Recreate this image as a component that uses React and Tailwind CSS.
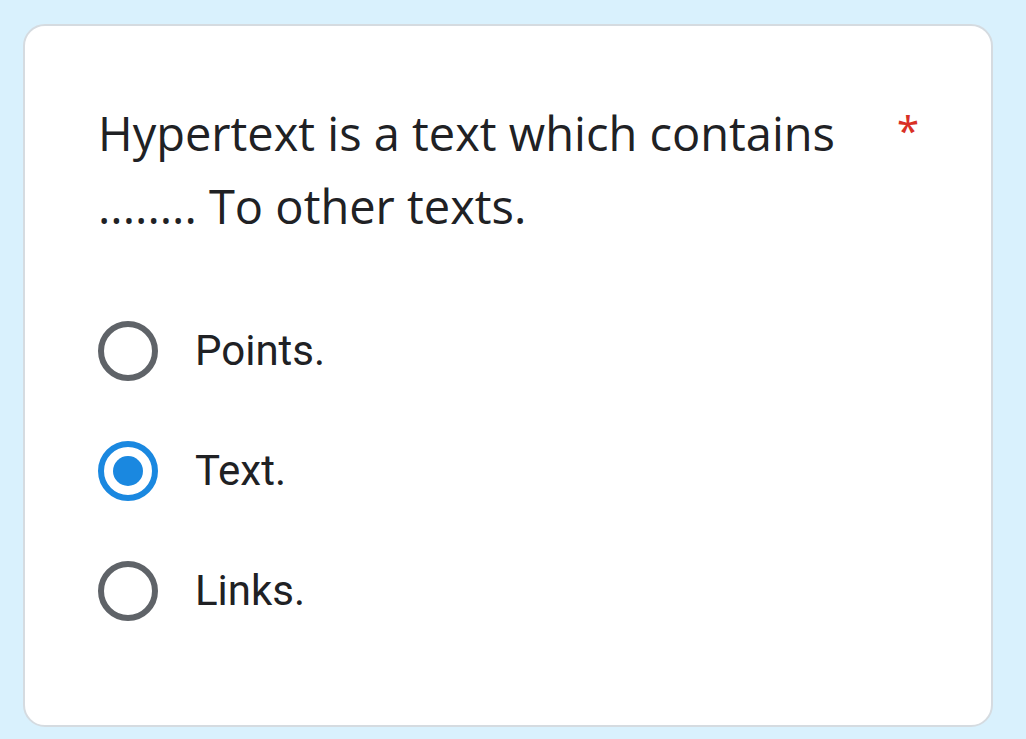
import React, { useState } from "react";

const options = ["Points.", "Text.", "Links."];

const Radio = ({ checked }) => (
  <span
    className={
      "flex h-[60px] w-[60px] shrink-0 items-center justify-center rounded-full border-[6px] " +
      (checked ? "border-[#1a88e0]" : "border-[#5f6368]")
    }
  >
    {checked && <span className="h-[30px] w-[30px] rounded-full bg-[#1a88e0]" />}
  </span>
);

const App = () => {
  const [selected, setSelected] = useState("Text.");

  return (
    <div className="min-h-[739px] bg-[#d9f1fd] pl-[23px] pr-[33px] pt-[24px] pb-[14px]">
      <div className="rounded-[22px] border-2 border-[#d5dbe0] bg-white pl-[73px] pr-[60px] pt-[71px] pb-[104px]">
        <div className="flex items-start">
          <h2
            className="w-[780px] text-[47px] leading-[73px] text-[#202124]"
            style={{ fontFamily: "'Open Sans', sans-serif" }}
          >
            Hypertext is a text which contains ........ To other texts.
          </h2>
          <span className="ml-[19px] mt-[3px] text-[40px] leading-[60px] text-[#d93025]">*</span>
        </div>

        <div className="mt-[78px] flex flex-col gap-[60px]">
          {options.map((opt) => (
            <label
              key={opt}
              className="flex cursor-pointer items-center gap-[37px]"
              onClick={() => setSelected(opt)}
            >
              <Radio checked={selected === opt} />
              <span
                className="text-[42px] leading-[60px] text-[#202124]"
                style={{ fontFamily: "Roboto, sans-serif" }}
              >
                {opt}
              </span>
            </label>
          ))}
        </div>
      </div>
    </div>
  );
};

export default App;
